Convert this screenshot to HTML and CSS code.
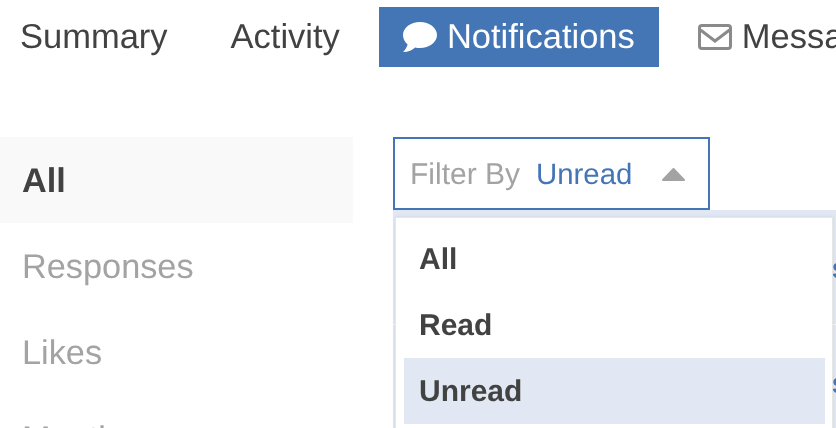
FILE: index.html
```html
<!DOCTYPE html>
<html lang="en">

<head>
    <meta charset="UTF-8">
    <meta name="viewport" content="width=device-width, initial-scale=1.0">
    <title>Notifications</title>
    <link rel="stylesheet" href="styles.css">
</head>

<body>
    <nav class="tabs">
        <a class="tab">Summary</a>
        <a class="tab">Activity</a>
        <a class="tab tab-active">
            <svg class="tab-icon" width="34" height="30" viewBox="0 0 34 30">
                <path fill="#fff" d="M17 0C26.4 0 34 5.800 34 13S26.400 26 17 26C15.300 26 13.700 25.800 12.200 25.400C9.400 27.900 5.400 30 0 30C2.100 27.900 3.900 25.300 4.600 22.400C1.800 20 0 16.700 0 13C0 5.800 7.600 0 17 0Z" />
            </svg>
            Notifications
        </a>
        <a class="tab">
            <svg class="tab-icon" width="34" height="26" viewBox="0 0 34 26">
                <rect x="1.500" y="1.500" width="31" height="23" rx="2.500" fill="none" stroke="#8a8a8a" stroke-width="3" />
                <path d="M2.500 6L17 17L31.500 6" fill="none" stroke="#8a8a8a" stroke-width="3" />
            </svg>
            Messages
        </a>
    </nav>

    <div class="main">
        <ul class="side-menu">
            <li class="side-item side-item-active">All</li>
            <li class="side-item">Responses</li>
            <li class="side-item">Likes</li>
            <li class="side-item">Mentions</li>
        </ul>

        <div class="content">
            <div class="filter">
                <span class="filter-label">Filter By</span>
                <span class="filter-value">Unread</span>
                <svg class="filter-caret" width="23" height="13" viewBox="0 0 23 13">
                    <path fill="#a3a3a3" stroke="#a3a3a3" stroke-width="2" stroke-linejoin="round" d="M11.500 1L22 12H1Z" />
                </svg>
            </div>

            <div class="feed">
                <div class="feed-row"><a class="feed-link">See</a></div>
                <div class="feed-row"><a class="feed-link">See</a></div>
            </div>

            <ul class="filter-menu">
                <li class="filter-option">All</li>
                <li class="filter-option">Read</li>
                <li class="filter-option filter-option-active">Unread</li>
            </ul>
        </div>
    </div>
</body>

</html>
```

FILE: styles.css
```css
html,
body {
    height: 100%;
    overflow: hidden;
}

body {
    font-family: "Liberation Sans", Arial, sans-serif;
    background-color: #fff;
    color: #424242;
    margin: 0;
    padding: 0;
    text-rendering: geometricPrecision;
    will-change: transform;
}

ul {
    list-style: none;
    margin: 0;
    padding: 0;
}

.tabs {
    display: flex;
    gap: 15px;
    padding: 7px 0 0 20px;
    white-space: nowrap;
}

.tab {
    display: flex;
    align-items: center;
    gap: 10px;
    height: 60px;
    padding: 0 24px;
    font-size: 34.500px;
}

.tab:first-child {
    padding-left: 0;
}

.tab-active {
    background-color: #4475b4;
    color: white;
}

.tab-icon {
    flex-shrink: 0;
}

.main {
    display: flex;
    gap: 40px;
    margin-top: 70px;
}

.side-menu {
    flex: 0 0 353px;
}

.side-item {
    display: flex;
    align-items: center;
    box-sizing: border-box;
    height: 86px;
    padding: 2px 0 0 22px;
    font-size: 34.300px;
    color: #a3a3a3;
}

.side-item-active {
    background-color: #f9f9f9;
    color: #424242;
    font-weight: bold;
}

.content {
    position: relative;
    flex: 1;
    min-width: 0;
}

.filter {
    display: flex;
    align-items: center;
    box-sizing: border-box;
    width: 317px;
    height: 73px;
    padding: 2px 15px 0;
    border: 2px solid #4475b4;
    font-size: 30px;
}

.filter-label {
    color: #a3a3a3;
}

.filter-value {
    margin-left: 16px;
    color: #4475b4;
    font-size: 29.400px;
}

.filter-caret {
    margin-left: 30px;
}

.feed {
    background-color: #e1e8f3;
    overflow: hidden;
}

.feed-row {
    height: 115px;
    padding: 48px 0 0 439px;
    box-sizing: border-box;
    border-bottom: 1px solid #f4f6fa;
    font-size: 22px;
    white-space: nowrap;
}

.feed-link {
    color: #4475b4;
    font-weight: bold;
}

.filter-menu {
    position: absolute;
    top: 81px;
    left: 3px;
    width: 436px;
    box-sizing: border-box;
    padding: 8px 7px 8px 8px;
    background-color: #fff;
    box-shadow: 0 0 0 1px #e6e6e6, 0 0 3px 1px rgba(90, 100, 120, 0.15);
}

.filter-option {
    display: flex;
    align-items: center;
    box-sizing: border-box;
    height: 66px;
    padding: 2px 0 0 15px;
    font-size: 30px;
    font-weight: bold;
}

.filter-option-active {
    background-color: #e1e8f3;
}
```
